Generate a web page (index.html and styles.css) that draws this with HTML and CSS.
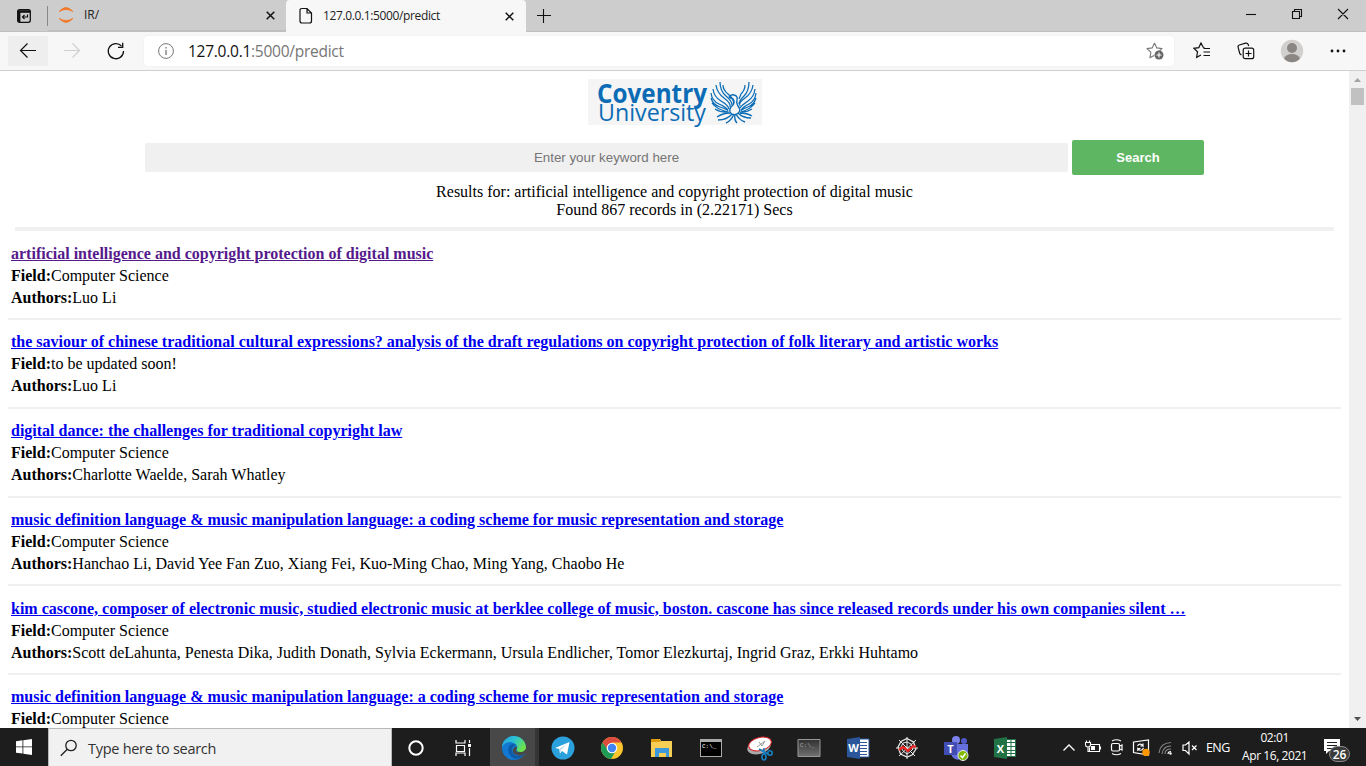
FILE: index.html
```html
<!DOCTYPE html>
<html lang="en">
<head>
<meta charset="utf-8">
<title>127.0.0.1:5000/predict</title>
<link rel="stylesheet" href="styles.css">
</head>
<body>
<header class="tabs">
  <svg class="tab-actions" width="48" height="32" fill="none" stroke="#111"><rect x="17.700" y="9.700" width="12.600" height="12.600" rx="2" stroke-width="1.300"/><path d="M17.700 11.500h12.600" stroke-width="2.600"/><path d="M19.200 11v11" stroke-width="2.400"/><path d="M27.500 14.500V17H22.500m2-2-2 2 2 2" stroke-width="1.200"/><path d="M47.500 6v20" stroke="#888"/></svg>
  <div class="tab tab-back">
    <svg width="18" height="18" stroke="#f37726" stroke-width=".8"><path d="M2 5.700Q9-2.500 16 5.700Q9 1.200 2 5.700M2 12.300Q9 20.500 16 12.300Q9 16.800 2 12.300" fill="#f37726"/></svg>
    <span class="tab-title">IR/</span>
    <svg class="close" width="9" height="9" stroke="#111" stroke-width="1.500"><path d="m.7.7 7.600 7.600m0-7.600L.7 8.300"/></svg>
  </div>
  <div class="tab tab-active">
    <svg width="14" height="18" fill="none" stroke="#111" stroke-width="1.200"><path d="M3 1.500h5l4.500 4.500v8q0 2-2 2H3q-2 0-2-2V3.500q0-2 2-2ZM8 1.500V6h4.500"/></svg>
    <span class="tab-title">127.0.0.1:5000/predict</span>
    <svg class="close" width="9" height="9" stroke="#111" stroke-width="1.500"><path d="m.7.7 7.600 7.600m0-7.600L.7 8.300"/></svg>
  </div>
  <svg class="plus" width="14" height="14" stroke="#111" stroke-width="1.100"><path d="M6.500 0v14M0 6.500h14"/></svg>
  <svg class="window-buttons" width="116" height="32" fill="none" stroke="#111" stroke-width="1.100"><path d="M-4 14.500H6"/><path d="M42.500 11.500h7v7h-7zM44.500 11V9.500h7v7H50M88 9l10 10m0-10L88 19"/></svg>
</header>
<nav class="toolbar">
  <span class="nav-button back"><svg width="18" height="16" fill="none" stroke="#111" stroke-width="1.200"><path d="M17 7.500H1.500M8.500.5l-7 7 7 7"/></svg></span>
  <span class="nav-button"><svg width="18" height="16" fill="none" stroke="#cfcfcf" stroke-width="1.200"><path d="M1 7.500h15.500m-7-7 7 7-7 7"/></svg></span>
  <span class="nav-button"><svg width="18" height="18" fill="none" stroke="#111" stroke-width="1.300"><path d="M16.500 9A7.600 7.600 0 1 1 14.500 4M15.700.8v4.600H11"/></svg></span>
  <div class="address">
    <svg width="16" height="16" fill="none" stroke="#777"><circle cx="8" cy="8" r="7.400"/><path d="M8 7v5M8 4v1.500" stroke-width="1.300"/></svg>
    <span class="url">127.0.0.1<span class="url-rest">:5000/predict</span></span>
    <svg class="star" width="18" height="18" fill="none" stroke="#777" stroke-width="1.100"><path d="m8.500 1 2.300 4.900 5.200.7-3.900 3.800M8.500 1 6.200 5.900 1 6.600l3.900 3.700-1 5.500 4.200-2.400" stroke-linejoin="round"/><circle cx="13" cy="13" r="4.500" fill="#666" stroke="none"/><path d="M13 10.500v5M10.500 13h5" stroke="#fff"/></svg>
  </div>
  <div class="actions">
    <svg width="18" height="18" fill="none" stroke="#111" stroke-width="1.200"><path d="m11.500 5.500-1.300-.2L8 1 5.800 5.600 1 6.300l3.500 3.500L3.600 15.300 8 13M10.500 6.500H17M10.500 10H17M10.500 13.500H17"/></svg>
    <svg width="18" height="18" fill="none" stroke="#111" stroke-width="1.200"><rect x="6.200" y="6.200" width="10.500" height="10.500" rx="2"/><path d="M11.500 8.500v6M8.500 11.500h6M4.500 13Q3 12.500 2.600 11L1.100 5.200Q.7 3.500 2.400 3L8.500 1.200Q10.500.8 11.200 2.500l.5 1.500"/></svg>
    <svg width="24" height="24"><circle cx="12" cy="12" r="11.200" fill="#d2d0ce"/><circle cx="12" cy="9" r="5" fill="#8a8683"/><path d="M4 19.500Q6 15 12 15t8 4.500Q17 23.200 12 23.200T4 19.500" fill="#8a8683"/></svg>
    <svg width="16" height="6" fill="#111"><circle cx="2" cy="3" r="1.400"/><circle cx="8" cy="3" r="1.400"/><circle cx="14" cy="3" r="1.400"/></svg>
  </div>
</nav>
<div class="viewport">
  <main class="page">
    <svg class="logo" width="174" height="46" viewBox="0 0 174 46"><rect width="174" height="46" fill="#f5f5f5"/><g fill="#0b6cb5"><text class="logo-name" x="9" y="23.500" textLength="110" lengthAdjust="spacingAndGlyphs">Coventry</text><text class="logo-kind" x="10" y="41.500" textLength="108" lengthAdjust="spacingAndGlyphs">University</text></g>
      <g fill="none" stroke="#0b6cb5" stroke-width="1.250"><path d="M132 3Q132 12 138 17T144 26M135 6Q135 11 140 15T146 24M128 6Q129 14 136 19T142 28M125 10Q126 18 133 22T141 30M123 14Q124 22 131 25T140 31M123 19Q125 26 132 28T140 32M124 24Q128 30 140 33M127 30Q133 34 141 33"/><path d="M161 3Q161 12 156 17T151 25M157 6Q157 11 153 15L151 20M165 6Q164 14 157 19T152 27M167 10Q166 18 160 22T152 29M168 14Q167 22 161 25T153 31M168 19Q166 26 160 28T153 32M167 24Q163 30 153 33M164 30Q158 34 152 33"/><path d="M141 18q2-3 5-2 4 1 3 5-1 3 1 6 4 5-1 8-5 2-7-2-1-4 3-7 2-3 0-6l-4-2M144 35q-5 6-14 6m16-6q-3 7-8 9m9-9q-1 6 2 9m-1-9q3 6 9 8m-7-9q5 5 13 5M142 34q-7 0-13 4m23-4q7 0 12 3" stroke-width="1.400"/></g></svg>
    <form class="search"><input class="keyword" type="text" placeholder="Enter your keyword here"><button class="submit" type="button">Search</button></form>
    <div class="summary">Results for: artificial intelligence and copyright protection of digital music<br>Found 867 records in (2.22171) Secs</div>
    <div class="rule"></div>
    <article class="result"><a class="title visited">artificial intelligence and copyright protection of digital music</a><div><b>Field:</b>Computer Science</div><div><b>Authors:</b>Luo Li</div></article>
    <article class="result"><a class="title">the saviour of chinese traditional cultural expressions? analysis of the draft regulations on copyright protection of folk literary and artistic works</a><div><b>Field:</b>to be updated soon!</div><div><b>Authors:</b>Luo Li</div></article>
    <article class="result"><a class="title">digital dance: the challenges for traditional copyright law</a><div><b>Field:</b>Computer Science</div><div><b>Authors:</b>Charlotte Waelde, Sarah Whatley</div></article>
    <article class="result"><a class="title">music definition language &amp; music manipulation language: a coding scheme for music representation and storage</a><div><b>Field:</b>Computer Science</div><div><b>Authors:</b>Hanchao Li, David Yee Fan Zuo, Xiang Fei, Kuo-Ming Chao, Ming Yang, Chaobo He</div></article>
    <article class="result"><a class="title">kim cascone, composer of electronic music, studied electronic music at berklee college of music, boston. cascone has since released records under his own companies silent …</a><div><b>Field:</b>Computer Science</div><div><b>Authors:</b>Scott deLahunta, Penesta Dika, Judith Donath, Sylvia Eckermann, Ursula Endlicher, Tomor Elezkurtaj, Ingrid Graz, Erkki Huhtamo</div></article>
    <article class="result"><a class="title">music definition language &amp; music manipulation language: a coding scheme for music representation and storage</a><div><b>Field:</b>Computer Science</div></article>
  </main>
  <aside class="scrollbar"><svg width="17" height="17"><path d="m5 11 3.500-4 3.500 4z" fill="#a3a3a3"/></svg><div class="thumb"></div><svg class="down" width="17" height="17"><path d="m5 6 3.500 4L12 6z" fill="#505050"/></svg></aside>
</div>
<footer class="taskbar">
  <div class="start"><svg width="16" height="16" fill="#fff"><path d="M0 2.200 6.500 1.300v6.200H0zM7.300 1.200 16 0v7.500H7.300zM0 8.300h6.500v6.200L0 13.700zM7.300 8.300H16V16l-8.700-1.300z"/></svg></div>
  <div class="taskbar-search"><svg width="18" height="18" fill="none" stroke="#222" stroke-width="1.300"><circle cx="11" cy="6.500" r="5.200"/><path d="m7.300 10.200-6.500 6.500"/></svg><span class="hint">Type here to search</span></div>
  <div class="apps">
    <span class="app"><svg width="24" height="24"><circle cx="12" cy="12" r="6.700" fill="none" stroke="#fff" stroke-width="2"/></svg></span>
    <span class="app task-view"><svg width="24" height="24" fill="none" stroke="#fff" stroke-width="1.200"><path d="M5 4v3h9V4M5.500 9.500h8v6h-8zM5 20v-3h9v3M18.500 4v3m0 5v8"/><path d="M17 8h3v3h-3z" fill="#fff" stroke="none"/></svg></span>
    <span class="app open"><svg width="24" height="24"><defs><linearGradient id="edge-top" x2="1" y2=".5"><stop stop-color="#239ee0"/><stop offset=".5" stop-color="#2bc3d2"/><stop offset="1" stop-color="#6be34b"/></linearGradient></defs><circle cx="12" cy="12" r="12" fill="#1479d2"/><path d="M15 19q6 2 8-2l2-3v-3l-9 1z" fill="#484848"/><path d="M0 11C1-3 22-4 24 11c0 5-6 6-9 4-1-1 1-3 0-5C12 4 3 5 0 11" fill="url(#edge-top)"/><path d="M12 8C5 8 5 15 8 19c3 5 9 5 14 0-5 2-11 1-12-4-.5-3 1-5 4-6z" fill="#0e5ca8"/><path d="M14.500 10.500c1 2-1 3 0 5 1 2 4 3 7 2-6 4-12 0-10.500-4 .5-1.500 2-3 3.500-3" fill="#484848"/></svg></span>
    <span class="app"><svg width="24" height="24"><circle cx="12" cy="12" r="11.500" fill="#2aa1dc"/><path d="m4 12 14.500-6L16 18.500l-5-3.500-2 2.500-.7-4.500z" fill="#fff"/><path d="m8.300 13 8-5.500L10 14l-1 3.500" fill="#c3dcea"/></svg></span>
    <span class="app"><svg width="24" height="24"><circle cx="12" cy="12" r="11" fill="#fbc52d"/><path d="M2.500 6.500A11 11 0 0 1 21.500 6.500H12L8 15z" fill="#de4c3e"/><path d="M2.500 6.500A11 11 0 0 0 11 23l5-8.500-7 1z" fill="#209a57"/><circle cx="12" cy="12" r="5.300" fill="#fff"/><circle cx="12" cy="12" r="4.200" fill="#4284f4"/></svg></span>
    <span class="app"><svg width="24" height="24"><path d="M1 3h9l1 2h11v16H1z" fill="#f7cf55"/><path d="M1 3h8l2 3H1z" fill="#df9c0c"/><path d="M5 12h14v9h-3v-4H9v4H5z" fill="#3d99db"/></svg></span>
    <span class="app"><svg width="24" height="24"><path d="M1 3h22v18H1z" fill="#aaa"/><path d="M2 6h20v14H2z"/><text x="3" y="12" class="prompt">C:\_</text></svg></span>
    <span class="app"><svg width="28" height="26"><ellipse cx="13" cy="12" rx="12" ry="7" transform="rotate(-15 13 12)" fill="#aaa"/><ellipse cx="14" cy="9" rx="11.500" ry="6.500" transform="rotate(-14 14 9)" fill="#fff" stroke="#d9262b"/><path d="m11 12 8-6-3 5-3-4" fill="none" stroke="#999"/><g fill="none" stroke="#1682c4" stroke-width="1.600"><path d="m13 14 9 5m-4 0 0-6"/><circle cx="24" cy="18" r="2.200"/><ellipse cx="18" cy="22" rx="2" ry="3"/></g></svg></span>
    <span class="app"><svg width="24" height="24"><defs><linearGradient id="console" x2="0" y2="1"><stop stop-color="#303030"/><stop offset="1" stop-color="#717171"/></linearGradient></defs><path d="M1 3.500h22v17H1z" fill="url(#console)" stroke="#999"/><text x="3" y="11" class="prompt dim">C:\_</text></svg></span>
    <span class="app"><svg width="24" height="24"><path d="M13 3h10v18H13z" fill="#fff" stroke="#2b579a"/><path d="M14 6.500h7m-7 3h7m-7 3h7m-7 3h7m-7 3h7" stroke="#2b579a"/><path d="M1 3 14 1v22L1 21z" fill="#2b579a"/><text x="7.500" y="16" class="app-letter">W</text></svg></span>
    <span class="app"><svg width="24" height="24" fill="none" stroke="#e8e8e8"><path d="m12 2.500 6.500 3.500 2.500 7-4 6-5 2-6.500-3-2.500-7 3-5.500z" stroke-width="1.300"/><path d="m12 6 4 2 2 5-3 3-3 2-4-3-2-4 2-4zM12 1v22M4 4l16 16M1 12h22M21 4 4 20"/><path d="m4 14 4-3 5 4 5-5 3 1" stroke="#ed2424" stroke-width="2.300"/></svg></span>
    <span class="app"><svg width="26" height="26"><circle cx="13" cy="5" r="4" fill="#7b83eb"/><circle cx="21" cy="6" r="3" fill="#5059c9"/><path d="M8 9h17v8q-1 5-5 5-3 4-8 2-4-2-4-7z" fill="#6570dd"/><path d="M1 7h13v13H1z" fill="#424db3"/><text x="7.500" y="17.500" class="app-letter">T</text><circle cx="20" cy="20.500" r="5" fill="#80b900" stroke="#eee"/><path d="m17.500 20.500 2 2 3-4" fill="none" stroke="#fff" stroke-width="1.500"/></svg></span>
    <span class="app"><svg width="24" height="24"><path d="M13 3.500h9.500v17H13z" fill="#fff" stroke="#217346"/><path d="M14 6.500h8m-8 4h8m-8 4h8m-8 3h8M18 4v16" stroke="#217346"/><path d="M1 3 14 1v22L1 21z" fill="#217346"/><text x="7.500" y="16.500" class="app-letter">X</text></svg></span>
  </div>
  <div class="tray">
    <svg width="14" height="18" fill="none" stroke="#fff" stroke-width="1.300"><path d="m1.500 12.500 5.500-5.500 5.500 5.500"/></svg>
    <svg class="battery" width="18" height="18" fill="none" stroke="#fff" stroke-width="1.100"><path d="M7 6.500h8.500v7h-10v-4M16.500 8.500v3M1.500 4.500h5v2q0 2.500-2.500 2.500T1.500 6.500zM2.500 4.500v-2M5.500 4.500v-2M4 9v4.500h2"/><path d="M7 8h4v4H7z" fill="#fff" stroke="none"/></svg>
    <svg class="meet" width="18" height="18" fill="none" stroke="#fff" stroke-width="1.200"><rect x="3.500" y="5.500" width="8" height="7.500" rx="1.500"/><path d="m12 8 2-1v5l-2-1M4 3q4.500-2.500 9 0M4 15.500q4.500 2.500 9 0"/></svg>
    <svg width="18" height="18" fill="none" stroke="#fff" stroke-width="1.200"><path d="M1.500 4 16.500 2v15L1.500 14.500z"/><path d="M5.500 8Q7 5.500 9.500 6.500L11 8V5.500M11 8H8.500M11.500 10Q10 13 7.500 12L5.800 10.500V13M6 10.500h2.500"/><circle cx="14" cy="14.500" r="3.700" fill="#ff9800" stroke="none"/></svg>
    <svg class="wifi" width="18" height="18" fill="none" stroke="#888" stroke-width="1.100"><path d="M2 15Q3 5 14 4.500M5 16Q6 8 14 8M8 16q0-5 6-5"/><path d="M11 16q0-2.500 3-2.500" stroke="#fff"/><circle cx="13.500" cy="15.500" r="1.200" fill="#fff" stroke="none"/></svg>
    <svg width="18" height="18" fill="none" stroke="#fff" stroke-width="1.200"><path d="M2 7h2.500L8 4v12l-3.500-3.500H2zM11 7.500l4.500 4.500m0-4.500L11 12"/></svg>
    <span class="language">ENG</span>
    <div class="clock"><span>02:01</span><span>Apr 16, 2021</span></div>
    <svg width="30" height="30"><path d="M1 2h16v12H6l-3 3v-3H1z" fill="#fff"/><path d="M4 5.500h10m-10 3h10m-10 3h7" stroke="#222"/><rect x="6.500" y="9.500" width="20" height="15" rx="7.500" fill="#3b3b3b" stroke="#888"/><text x="16.500" y="21.500" class="badge">26</text></svg>
  </div>
</footer>
</body>
</html>
```

FILE: styles.css
```css
* { box-sizing: border-box; }
svg { flex: none; display: block; }
body { margin: 0; width: 1366px; height: 766px; overflow: hidden; display: flex; flex-direction: column; background: #fff; font-family: "Open Sans", sans-serif; }
.tabs { height: 32px; flex: none; display: flex; background: #cdcdcd; border-bottom: 1px solid #c0c0c0; }
.tab { display: flex; align-items: center; }
.tab-back { width: 238px; padding: 0 11px 0 9px; border-bottom: 1px solid #bdbdbd; }
.tab-active { width: 240px; height: 32px; background: #f7f7f7; border-radius: 4px 4px 0 0; padding: 0 12px 0 13px; }
.tab-title { font-size: 12px; letter-spacing: -.37px; margin: -2px 0 0 10px; color: #222; }
.tab-back .tab-title { margin-left: 9px; letter-spacing: 0; }
.close { margin-left: auto; }
.plus { margin: 9px 0 0 11px; }
.window-buttons { margin-left: auto; overflow: visible; }
.toolbar { height: 39px; flex: none; display: flex; align-items: center; background: #f7f7f7; border-bottom: 1px solid #cfcfcf; padding-left: 8px; }
.nav-button { width: 40px; height: 30px; display: flex; align-items: center; justify-content: center; margin-right: 4px; }
.nav-button.back { background: #eee; border-radius: 2px; }
.address { width: 1030px; height: 30px; margin-left: 4px; background: #fff; border-radius: 4px; display: flex; align-items: center; padding: 0 10px 0 14px; box-shadow: 0 0 2px #e8e8e8; }
.url { font-size: 15.500px; margin-left: 14px; color: #111; letter-spacing: -.26px; }
.url-rest { color: #767676; }
.star { margin-left: auto; }
.actions { flex: 1; display: flex; align-items: center; padding: 0 20px 0 19px; justify-content: space-between; }
.viewport { height: 657px; flex: none; display: flex; }
.page { width: 1349px; height: 657px; overflow: hidden; padding: 8px; font: 16px "Liberation Serif", serif; color: #000; }
.logo { margin: 0 auto; overflow: visible; }
.logo-name { font: 700 27px "Open Sans", sans-serif; }
.logo-kind { font: 24.500px "Open Sans", sans-serif; }
.search { display: flex; align-items: center; justify-content: center; gap: 4px; height: 35px; margin: 15px 0 0; }
.keyword { width: 923px; height: 29px; border: 0; border-radius: 2px; background: #f0f0f0; text-align: center; padding: 0; font: 13.333px "Liberation Sans", sans-serif; }
.keyword::placeholder { color: #757575; }
.submit { width: 132px; height: 35px; border: 0; border-radius: 2px; background: #5eb663; color: #fff; font: 700 13px "Liberation Sans", sans-serif; }
.summary { margin-top: 8px; text-align: center; line-height: 18px; }
.rule { height: 4px; margin: 8px 7px 11px; background: #f0f0f0; }
.result { height: 88.750px; padding: 11.350px 3px 0; line-height: 22px; border-bottom: 2px solid #f0f0f0; white-space: nowrap; }
.rule + .result { height: 78px; padding-top: .6px; }
.title { display: block; width: fit-content; font-weight: 700; color: #00e; text-decoration: underline; }
.title.visited { color: #551a8b; }
.scrollbar { width: 17px; background: #f0f0f0; display: flex; flex-direction: column; }
.thumb { width: 13px; height: 17px; margin-left: 2px; background: #c1c1c1; }
.down { margin-top: auto; }
.taskbar { height: 38px; flex: none; display: flex; background: #1d1d1d; color: #fff; }
.start { width: 48px; display: flex; align-items: center; justify-content: center; }
.taskbar-search { width: 344px; background: #f1f1f1; border: 1px solid #b9b9b9; border-bottom: 0; display: flex; align-items: center; padding-left: 11px; color: #333; }
.hint { font-size: 14.500px; margin: 1px 0 0 10px; letter-spacing: -.28px; }
.apps { display: flex; width: 638px; }
.app { width: 49.100px; flex: none; display: flex; align-items: center; justify-content: center; padding: 2px 1px 0 0; }
.app.task-view { padding-right: 5px; }
.app.open { background: #484848; border-right: 4px solid #353535; padding-right: 0; padding-left: 2px; }
.prompt { font: 6px "Liberation Mono", monospace; fill: #fff; }
.dim { fill: #aaa; }
.app-letter { font: 700 11px "Open Sans", sans-serif; fill: #fff; text-anchor: middle; }
.tray { flex: 1; display: flex; align-items: center; padding-left: 32px; gap: 6px; }
.battery { margin-left: 2px; }
.wifi { margin-left: 1px; }
.language { font-size: 12.500px; letter-spacing: -.6px; margin-left: 1px; }
.clock { display: flex; flex-direction: column; align-items: center; width: 72px; margin-left: 3px; font-size: 12px; line-height: 18px; letter-spacing: -.43px; white-space: nowrap; }
.tray > :last-child { margin-left: 6px; margin-top: 9px; }
.badge { font: 600 12px "Open Sans", sans-serif; fill: #fff; text-anchor: middle; }
```
